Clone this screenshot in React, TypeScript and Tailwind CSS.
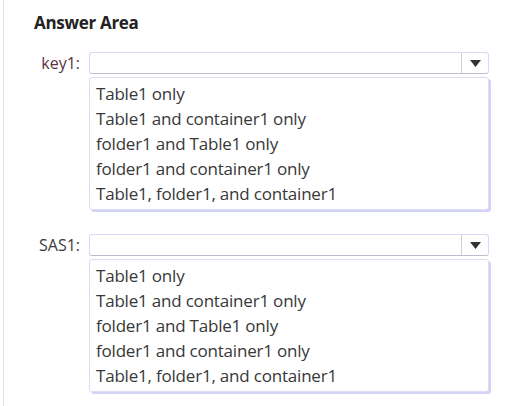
const options = [
  "Table1 only",
  "Table1 and container1 only",
  "folder1 and Table1 only",
  "folder1 and container1 only",
  "Table1, folder1, and container1",
];

function Dropdown({ label, labelClass }: { label: string; labelClass?: string }) {
  return (
    <div className="flex flex-col">
      <div className="flex items-center">
        <span className={`w-[46px] text-right text-[16px] leading-5 ${labelClass ?? "text-[#3b3b3b]"}`}>
          {label}
        </span>
        <div className="ml-[9px] flex h-[22px] w-[400px] items-stretch rounded-[3px] border border-[#d9d9f6] border-b-[#bdbdd0] bg-white">
          <div className="flex-1" />
          <div className="flex w-[27px] items-center justify-center border-l border-[#d0d0d8]">
            <svg width="11" height="7" viewBox="0 0 11 7">
              <path d="M0 0 L11 0 L5.5 7 Z" fill="#333" />
            </svg>
          </div>
        </div>
      </div>
      <div className="ml-[55px] mt-[3px] w-[400px] rounded-[3px] border border-[#dcdcf6] bg-white py-[3px] pl-[6px] shadow-[2px_2px_0_#d3d3f6]">
        {options.map((o) => (
          <div key={o} className="h-[25px] text-[17px] leading-[25px] tracking-[-0.2px] text-[#383838]">
            {o}
          </div>
        ))}
      </div>
    </div>
  );
}

export default function App() {
  return (
    <div
      className="h-[406px] w-[510px] bg-white"
      style={{ fontFamily: '"Open Sans", "Noto Sans", sans-serif' }}
    >
      <div className="ml-[3px] h-full border-l border-[#dedede] pl-[30px] pt-[13px]">
        <h2 className="text-[17px] font-bold leading-5 tracking-[-0.3px] text-[#222]">Answer Area</h2>
        <div className="mt-[19px] flex flex-col gap-[24px]">
          <Dropdown label="key1:" labelClass="text-[#5b3340]" />
          <Dropdown label="SAS1:" />
        </div>
      </div>
    </div>
  );
}
